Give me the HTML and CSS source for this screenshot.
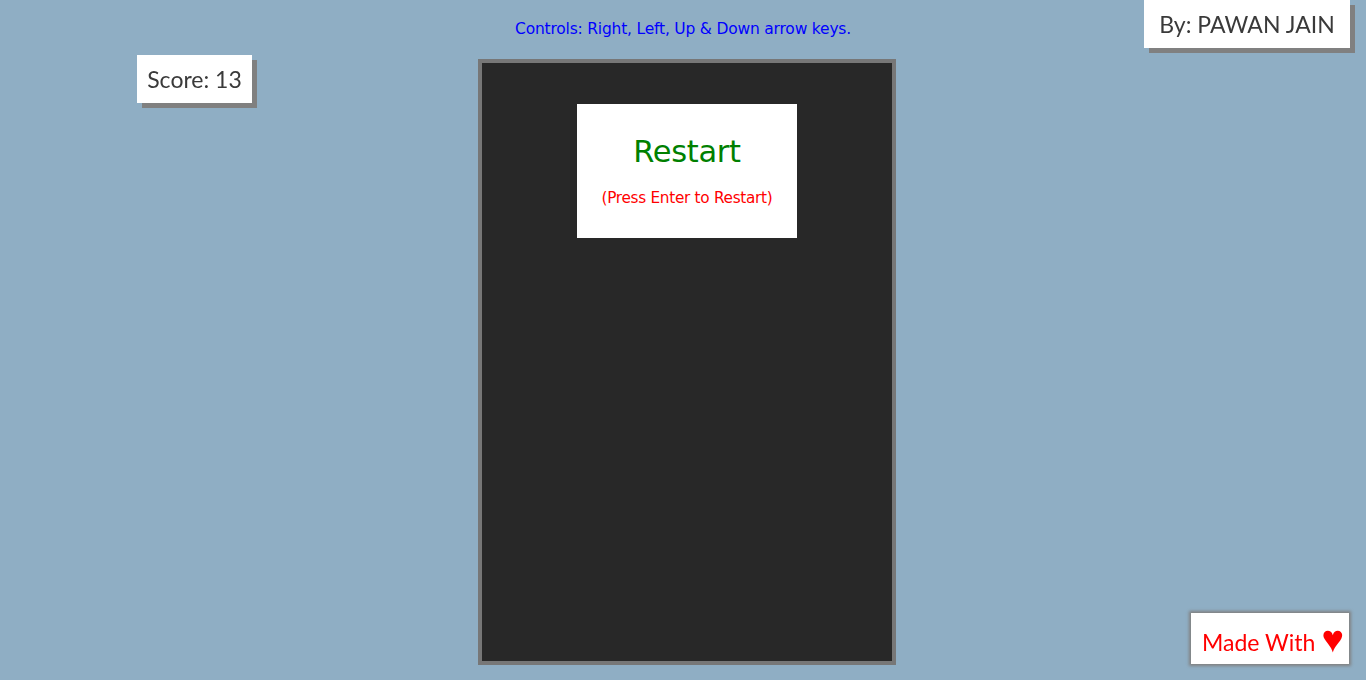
FILE: index.html
```html
<!DOCTYPE html>
<html>
<head>
<meta charset="utf-8">
<link rel="stylesheet" href="styles.css">
</head>
<body>
<div class="page">
  <p class="controls">Controls: Right, Left, Up &amp; Down arrow keys.</p>
  <div class="board">
    <div class="restart">
      <div class="restart-title">Restart</div>
      <div class="restart-sub">(Press Enter to Restart)</div>
    </div>
  </div>
</div>
<div class="score">Score: 13</div>
<div class="author">By: PAWAN JAIN</div>
<div class="made">Made With <span class="heart">&#9829;</span></div>
</body>
</html>
```
FILE: styles.css
```css
html, body {
  margin: 0;
  padding: 0;
  height: 100%;
  background: #8faec4;
  overflow: hidden;
}
.page {
  display: flex;
  flex-direction: column;
  align-items: center;
  padding-top: 19px;
}
.controls {
  margin: 0;
  font-family: "DejaVu Sans", sans-serif;
  font-size: 15.5px;
  color: #0000ff;
  height: 20px;
  line-height: 20px;
  letter-spacing: -0.2px;
}
.board {
  margin-top: 20px;
  margin-left: 8px;
  width: 410px;
  height: 557px;
  border: 4px solid #777777;
  background: #282828;
  display: flex;
  flex-direction: column;
  align-items: center;
  padding-top: 41px;
  box-sizing: content-box;
}
.restart {
  width: 220px;
  height: 134px;
  background: #ffffff;
  display: flex;
  flex-direction: column;
  align-items: center;
  font-family: "DejaVu Sans", sans-serif;
}
.restart-title {
  margin-top: 29px;
  font-size: 30.5px;
  color: #008000;
  line-height: 38px;
  letter-spacing: -0.3px;
}
.restart-sub {
  margin-top: 17px;
  font-size: 15.3px;
  color: #ff0000;
  line-height: 20px;
  letter-spacing: -0.3px;
}
.score, .author, .made {
  position: fixed;
  background: #ffffff;
  font-family: "Lato", sans-serif;
  color: #3a3a3a;
  box-sizing: border-box;
  display: flex;
  align-items: center;
  justify-content: center;
}
.score {
  left: 137px;
  top: 55px;
  width: 115px;
  height: 48px;
  font-size: 23px;
  box-shadow: 5px 5px 0 #808080;
}
.author {
  left: 1144px;
  top: 0;
  width: 206px;
  height: 48px;
  font-size: 23px;
  box-shadow: 5px 5px 0 #808080;
}
.made {
  left: 1191px;
  top: 613px;
  width: 158px;
  height: 51px;
  font-size: 23px;
  color: #ff0000;
  box-shadow: 0 0 3px 2px #808080;
  padding-top: 6px;
  padding-left: 6px;
}
.heart {
  font-size: 38px;
  margin-left: 6px;
  line-height: 1;
  position: relative;
  top: -5px;
}
```
